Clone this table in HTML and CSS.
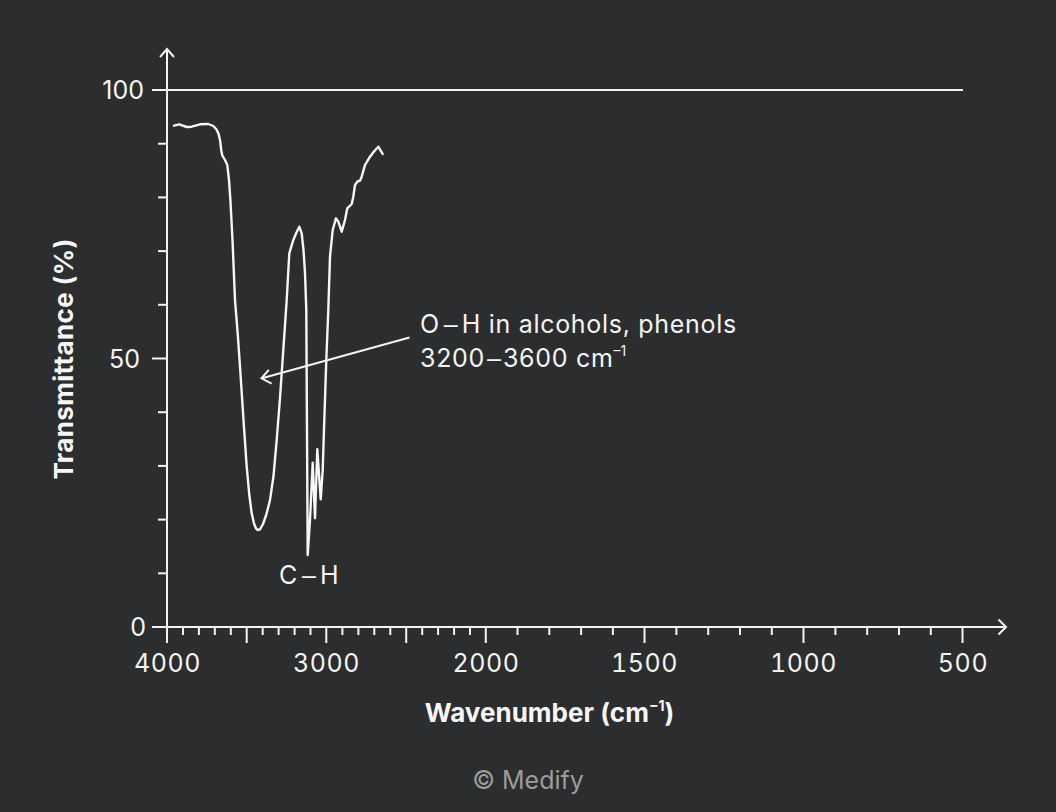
FILE: index.html
```html
<!DOCTYPE html>
<html lang="en">
<head>
<meta charset="utf-8">
<title>IR spectrum – alcohol</title>
<link rel="stylesheet" href="styles.css">
</head>
<body>
<main class="figure">
  <svg class="chart" viewBox="0 0 1056 765" width="1056" height="765" xmlns="http://www.w3.org/2000/svg">
    <!-- axes -->
    <g class="axis">
      <line x1="167" y1="49" x2="167" y2="643"/>
      <polyline points="160,57 167,49 174,57"/>
      <line x1="152" y1="627" x2="1006" y2="627"/>
      <polyline points="998.5,619.5 1006,627 998.5,634.5"/>
      <line x1="152" y1="90" x2="963" y2="90"/>
    </g>
    <!-- y ticks -->
    <g class="axis">
      <line x1="158" y1="573.3" x2="167" y2="573.3"/>
      <line x1="158" y1="519.6" x2="167" y2="519.6"/>
      <line x1="158" y1="465.9" x2="167" y2="465.9"/>
      <line x1="158" y1="412.2" x2="167" y2="412.2"/>
      <line x1="152" y1="358.5" x2="167" y2="358.5"/>
      <line x1="158" y1="304.8" x2="167" y2="304.8"/>
      <line x1="158" y1="251.1" x2="167" y2="251.1"/>
      <line x1="158" y1="197.4" x2="167" y2="197.4"/>
      <line x1="158" y1="143.7" x2="167" y2="143.7"/>
    </g>
    <!-- x ticks -->
    <g class="axis">
      <line x1="183" y1="627" x2="183" y2="635"/>
      <line x1="198.9" y1="627" x2="198.9" y2="635"/>
      <line x1="214.8" y1="627" x2="214.8" y2="635"/>
      <line x1="230.8" y1="627" x2="230.8" y2="635"/>
      <line x1="246.7" y1="627" x2="246.7" y2="643"/>
      <line x1="262.7" y1="627" x2="262.7" y2="635"/>
      <line x1="278.6" y1="627" x2="278.6" y2="635"/>
      <line x1="294.6" y1="627" x2="294.6" y2="635"/>
      <line x1="310.5" y1="627" x2="310.5" y2="635"/>
      <line x1="326.3" y1="627" x2="326.3" y2="643"/>
      <line x1="342.4" y1="627" x2="342.4" y2="635"/>
      <line x1="358.4" y1="627" x2="358.4" y2="635"/>
      <line x1="374.3" y1="627" x2="374.3" y2="635"/>
      <line x1="390.3" y1="627" x2="390.3" y2="635"/>
      <line x1="406.2" y1="627" x2="406.2" y2="643"/>
      <line x1="422.2" y1="627" x2="422.2" y2="635"/>
      <line x1="438.1" y1="627" x2="438.1" y2="635"/>
      <line x1="454.1" y1="627" x2="454.1" y2="635"/>
      <line x1="470" y1="627" x2="470" y2="635"/>
      <line x1="485.8" y1="627" x2="485.8" y2="643"/>
      <line x1="517.5" y1="627" x2="517.5" y2="635"/>
      <line x1="549.3" y1="627" x2="549.3" y2="635"/>
      <line x1="581.1" y1="627" x2="581.1" y2="635"/>
      <line x1="612.9" y1="627" x2="612.9" y2="635"/>
      <line x1="644.5" y1="627" x2="644.5" y2="643"/>
      <line x1="676.4" y1="627" x2="676.4" y2="635"/>
      <line x1="708.2" y1="627" x2="708.2" y2="635"/>
      <line x1="740" y1="627" x2="740" y2="635"/>
      <line x1="771.8" y1="627" x2="771.8" y2="635"/>
      <line x1="803.5" y1="627" x2="803.5" y2="643"/>
      <line x1="835.4" y1="627" x2="835.4" y2="635"/>
      <line x1="867.2" y1="627" x2="867.2" y2="635"/>
      <line x1="899" y1="627" x2="899" y2="635"/>
      <line x1="930.8" y1="627" x2="930.8" y2="635"/>
      <line x1="962.5" y1="627" x2="962.5" y2="643"/>
    </g>

    <!-- tick labels -->
    <g class="tick-label y-label">
      <text x="144" y="99" text-anchor="end">100</text>
      <text x="140" y="367.5" text-anchor="end">50</text>
      <text x="146" y="636" text-anchor="end">0</text>
    </g>
    <g class="tick-label x-label">
      <text x="167.5" y="672" text-anchor="middle">4000</text>
      <text x="326.5" y="672" text-anchor="middle">3000</text>
      <text x="486" y="672" text-anchor="middle">2000</text>
      <text x="644.5" y="672" text-anchor="middle">1500</text>
      <text x="803.5" y="672" text-anchor="middle">1000</text>
      <text x="963" y="672" text-anchor="middle">500</text>
    </g>

    <!-- axis titles -->
    <text class="axis-title y-title" transform="translate(72.5 359) rotate(-90)" text-anchor="middle">Transmittance (%)</text>
    <text class="axis-title" x="549.5" y="722" text-anchor="middle">Wavenumber (cm<tspan class="sup" dy="-11">−1</tspan><tspan dy="11">)</tspan></text>

    <!-- spectrum -->
    <polyline class="curve" points="174,125.7 179.3,124.3 186.7,127 191.7,126.7 200,124.3 208.3,124 213.3,126 216.5,129.5 218.6,134 220.2,141 221.2,150 222.3,155.5 225,160 227.3,165 229,180 230.4,200 232.5,240 235,300 237.8,335 240,366.7 243.5,420 246.7,466.7 249.3,495 251.7,513.3 254,523.5 256,528.5 257.8,530 260,529.3 263,524 266.5,514 270,500 273.5,476 276.7,440 280,398 283.3,350 286.7,300 289.3,253.3 293.3,240 296.5,232.5 299.3,226.7 301.7,233.3 303.5,250 305,273 306.3,310 307.7,555 310,520 312.7,462.7 315,518.3 317.3,449.3 320.7,499.3 322.7,470 324.3,420 326.3,360 328.3,310 330,256.7 332.7,230 336,218.3 338.3,221.7 341.7,231.7 345,220 347.3,208.3 351.7,204 353.3,196.7 355,185 357.5,181.5 360,180.7 361.7,176.7 365,165 370,156.7 374,151.5 378.3,146.7 382.7,154"/>

    <!-- annotations -->
    <line class="axis" x1="409.5" y1="337.5" x2="262" y2="378.2"/>
    <polyline class="axis" points="268.8,369.8 261.5,378.3 271.6,383.6"/>
    <g class="note">
      <text x="420" y="333">O<tspan class="dash" dx="4">–</tspan><tspan dx="4">H in alcohols, phenols</tspan></text>
      <text x="420" y="366.5">3200<tspan class="dash" dx="2">–</tspan><tspan dx="2">3600 cm</tspan><tspan class="sup-note" dy="-11">–1</tspan></text>
      <text x="279" y="584">C<tspan class="dash" dx="4">–</tspan><tspan dx="4">H</tspan></text>
    </g>
  </svg>
  <p class="credit">© Medify</p>
</main>
</body>
</html>
```

FILE: styles.css
```css
html, body {
  margin: 0;
  padding: 0;
}

body {
  width: 1056px;
  height: 812px;
  overflow: hidden;
  background: #2c2d2f;
  font-family: Inter, "Liberation Sans", Arial, sans-serif;
}

.figure {
  display: flex;
  flex-direction: column;
  align-items: center;
}

.chart {
  display: block;
}

.axis {
  stroke: #f4f4f4;
  stroke-width: 2;
  fill: none;
  stroke-linecap: butt;
}

.curve {
  stroke: #f6f6f6;
  stroke-width: 2.4;
  fill: none;
  stroke-linejoin: round;
  stroke-linecap: round;
}

.tick-label {
  font-family: Inter, "Liberation Sans", Arial, sans-serif;
  font-size: 25px;
  fill: #f4f4f4;
}

.x-label {
  font-variant-numeric: tabular-nums;
  letter-spacing: 0.6px;
}

.axis-title {
  font-family: Inter, "Liberation Sans", Arial, sans-serif;
  font-size: 26px;
  font-weight: 700;
  fill: #f6f6f6;
}

.y-title {
  letter-spacing: 0.35px;
}

.axis-title .sup {
  font-size: 14px;
  font-weight: 700;
}

.note {
  font-family: Inter, "Liberation Sans", Arial, sans-serif;
  font-size: 25px;
  letter-spacing: 0.7px;
  fill: #f4f4f4;
}

.note .dash {
  font-family: "Liberation Sans", Arial, sans-serif;
  letter-spacing: 0;
}

.note .sup-note {
  font-size: 14px;
  letter-spacing: 0;
}

.credit {
  margin: 0;
  font-size: 25px;
  line-height: 30px;
  color: #9c9c9c;
  text-align: center;
}
```
